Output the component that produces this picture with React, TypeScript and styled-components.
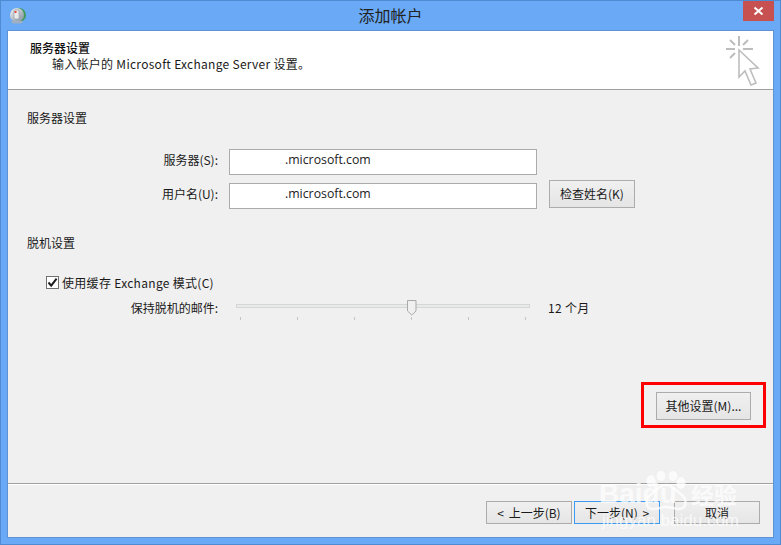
import styled, { createGlobalStyle } from 'styled-components'

const GlobalStyle = createGlobalStyle`
  html, body {
    margin: 0;
    padding: 0;
    overflow: hidden;
    background: #69a9f5;
  }
  body {
    font-family: "Noto Sans CJK SC", "Open Sans", "Noto Sans", sans-serif;
    font-size: 12px;
    color: #1a1a1a;
  }
`

const Window = styled.div`
  box-sizing: border-box;
  width: 781px;
  height: 545px;
  border: 1px solid #4f8bd3;
  background: #69a9f5;
  display: flex;
  flex-direction: column;
  padding: 0 6px 6px;
  position: relative;
  overflow: hidden;
`

const TitleBar = styled.div`
  height: 29px;
  flex: none;
  display: flex;
  align-items: center;
  position: relative;
`

const TitleText = styled.div`
  flex: 1;
  text-align: center;
  font-size: 16px;
  line-height: 29px;
  color: #222;
`

const AppIcon = styled.svg`
  position: absolute;
  left: 2px;
  top: 6px;
`

const CloseButton = styled.div`
  position: absolute;
  right: 0;
  top: 0;
  width: 31px;
  height: 20px;
  background: #c75050;
  display: flex;
  align-items: center;
  justify-content: center;
`

const Client = styled.div`
  flex: 1;
  display: flex;
  flex-direction: column;
  background: #f0f0f0;
  border: 1px solid #5d93d6;
  min-height: 0;
  position: relative;
`

const Header = styled.div`
  height: 59px;
  flex: none;
  box-sizing: border-box;
  background: #fff;
  border-bottom: 1px solid #a0a0a0;
  padding: 9px 0 0 22px;
  display: flex;
  flex-direction: column;
  position: relative;
`

const HeaderTitle = styled.div`
  font-size: 12px;
  line-height: 16px;
  font-weight: 500;
  color: #111;
`

const HeaderSub = styled.div`
  font-size: 12px;
  line-height: 15px;
  padding-left: 22px;
  letter-spacing: 0.28px;
`

const HeaderIcon = styled.svg`
  position: absolute;
  right: 13px;
  top: 5px;
`

const Body = styled.div`
  flex: 1;
  padding: 20px 0 0 19px;
  display: flex;
  flex-direction: column;
`

const SectionLabel = styled.div`
  font-size: 12px;
  line-height: 16px;
`

const ServerGrid = styled.div`
  display: grid;
  grid-template-columns: 202px 308px 86px;
  grid-template-rows: 26px 26px;
  row-gap: 8px;
  column-gap: 0;
  margin-top: 23px;
  align-items: center;
`

const FieldLabel = styled.label`
  text-align: right;
  padding-right: 11px;
  font-size: 12px;
  line-height: 16px;
  margin-top: -5px;
`

const TextField = styled.div`
  box-sizing: border-box;
  height: 26px;
  background: #fff;
  border: 1px solid #ababab;
  padding-left: 55px;
  font-size: 12.3px;
  line-height: 19px;
  color: #222;
  font-family: "Open Sans", "Noto Sans", sans-serif;
`

const Button = styled.div<{ $width: number; $focused?: boolean }>`
  box-sizing: border-box;
  width: ${({ $width }) => $width}px;
  display: flex;
  align-items: center;
  justify-content: center;
  border: 1px solid ${({ $focused }) => ($focused ? '#3c9af0' : '#acacac')};
  background: linear-gradient(#f0f0f0, #e5e5e5);
  font-size: 12px;
  line-height: 16px;
  color: #1a1a1a;
  white-space: nowrap;
`

const CheckNameButton = styled(Button)`
  height: 28px;
  margin-left: 12px;
  margin-top: -4px;
`

const OfflineSection = styled.div`
  margin-top: 26px;
`

const CheckRow = styled.div`
  display: flex;
  align-items: center;
  gap: 3px;
  margin: 23px 0 0 19px;
  height: 16px;
  letter-spacing: 0.3px;
`

const CheckBox = styled.div`
  box-sizing: border-box;
  width: 13px;
  height: 13px;
  background: #fff;
  border: 1px solid #707070;
  display: flex;
  align-items: center;
  justify-content: center;
`

const SliderRow = styled.div`
  display: grid;
  grid-template-columns: 191px 294px auto;
  column-gap: 0;
  margin-top: 10px;
  height: 24px;
  align-items: start;
`

const SliderLabel = styled.div`
  text-align: right;
  line-height: 16px;
`

const SliderTrack = styled.div`
  margin-left: 18px;
  width: 294px;
  height: 23px;
  position: relative;
`

const TrackBar = styled.div`
  box-sizing: border-box;
  height: 4px;
  margin-top: 4px;
  background: #e7eaea;
  border: 1px solid #d6d6d6;
`

const Ticks = styled.div`
  display: flex;
  justify-content: space-between;
  padding: 0 4px;
  margin-top: 9px;
`

const Tick = styled.i`
  display: block;
  width: 1px;
  height: 3px;
  background: #c4c4c4;
`

const Thumb = styled.svg`
  position: absolute;
  left: 171px;
  top: 0;
`

const SliderValue = styled.div`
  margin-left: 36px;
  line-height: 16px;
  white-space: nowrap;
  letter-spacing: 0.3px;
`

const MoreRow = styled.div`
  margin-top: auto;
  margin-right: 22px;
  margin-bottom: 63px;
  display: flex;
  justify-content: flex-end;
  position: relative;
`

const MoreButton = styled(Button)`
  height: 28px;
`

const Highlight = styled.div`
  position: absolute;
  box-sizing: border-box;
  right: -15px;
  top: -10px;
  width: 125px;
  height: 46px;
  border: 3px solid #f00;
  pointer-events: none;
`

const Footer = styled.div`
  flex: none;
  height: 54px;
  box-sizing: border-box;
  border-top: 1px solid #a0a0a0;
  box-shadow: inset 0 1px #fff;
  padding: 17px 13px 0 0;
  display: flex;
  justify-content: flex-end;
`

const FooterButton = styled(Button)<{ $gap?: number }>`
  height: 23px;
  margin-left: ${({ $gap }) => $gap ?? 0}px;
  word-spacing: 2px;
`

const Watermark = styled.div`
  position: absolute;
  left: 598px;
  top: 470px;
  width: 145px;
  height: 62px;
  color: rgba(255, 255, 255, 0.72);
  pointer-events: none;
  font-family: "Liberation Sans", sans-serif;
`

const WatermarkBrand = styled.div`
  position: absolute;
  left: 0;
  top: 9px;
  font-size: 28px;
  line-height: 28px;
  font-weight: 700;
  white-space: nowrap;
`

const WatermarkCn = styled.span`
  position: absolute;
  left: 92px;
  top: 0;
  font-family: "Noto Sans CJK SC", sans-serif;
  font-size: 23px;
  font-weight: 700;
`

const WatermarkUrl = styled.div`
  position: absolute;
  left: 3px;
  top: 41px;
  font-size: 17px;
  line-height: 18px;
  white-space: nowrap;
`

const PawIcon = styled.svg`
  position: absolute;
  left: 46px;
  top: 0;
`

export default function App() {
  return (
    <>
      <GlobalStyle />
      <Window>
        <TitleBar>
          <AppIcon width="18" height="18" viewBox="0 0 18 18">
            <defs>
              <linearGradient id="appBody" x1="0" y1="0" x2="1" y2="1">
                <stop offset="0" stopColor="#f4f6f8" />
                <stop offset="1" stopColor="#7f8b98" />
              </linearGradient>
            </defs>
            <circle cx="10" cy="8" r="7" fill="#3f9b5d" />
            <circle cx="8" cy="8" r="7" fill="url(#appBody)" />
            <rect x="5" y="3" width="5" height="9" rx="1" fill="#e8eaec" stroke="#8a97a5" strokeWidth="0.6" />
            <rect x="5.5" y="4" width="2" height="2" fill="#e4493f" />
            <ellipse cx="8" cy="15" rx="6" ry="1.6" fill="#9fb0c2" />
          </AppIcon>
          <TitleText>添加帐户</TitleText>
          <CloseButton>
            <svg width="11" height="10" viewBox="0 0 11 10">
              <path d="M1.5 1.5 9.5 8.5M9.5 1.5 1.5 8.5" stroke="#fff" strokeWidth="2" />
            </svg>
          </CloseButton>
        </TitleBar>
        <Client>
          <Header>
            <HeaderTitle>服务器设置</HeaderTitle>
            <HeaderSub>输入帐户的 Microsoft Exchange Server 设置。</HeaderSub>
            <HeaderIcon width="34" height="50" viewBox="0 0 34 50" fill="none" stroke="#bdbdbd" strokeWidth="2">
              <path d="M13 0V10M0 13H9M17 13H27M4 4 9 9M22 4 17 9M4 22 9 17" />
              <path d="M13 14V41L19 35 25 49 30 47 24 33 32 32Z" strokeWidth="1.6" fill="#fff" />
            </HeaderIcon>
          </Header>
          <Body>
            <SectionLabel>服务器设置</SectionLabel>
            <ServerGrid>
              <FieldLabel>服务器(S):</FieldLabel>
              <TextField>.microsoft.com</TextField>
              <span />
              <FieldLabel>用户名(U):</FieldLabel>
              <TextField>.microsoft.com</TextField>
              <CheckNameButton $width={86}>检查姓名(K)</CheckNameButton>
            </ServerGrid>
            <OfflineSection>
              <SectionLabel>脱机设置</SectionLabel>
              <CheckRow>
                <CheckBox>
                  <svg width="11" height="11" viewBox="0 0 11 11">
                    <path d="M1.5 5.5 4.2 8.6 9.6 1.6" fill="none" stroke="#1c1c1c" strokeWidth="2" />
                  </svg>
                </CheckBox>
                <span>使用缓存 Exchange 模式(C)</span>
              </CheckRow>
              <SliderRow>
                <SliderLabel>保持脱机的邮件:</SliderLabel>
                <SliderTrack>
                  <TrackBar />
                  <Ticks>
                    {[0, 1, 2, 3, 4, 5].map((n) => (
                      <Tick key={n} />
                    ))}
                  </Ticks>
                  <Thumb width="10" height="16" viewBox="0 0 10 16">
                    <path d="M.5.5H9V11L4.75 15 .5 11Z" fill="#f0f0f0" stroke="#a9a9a9" />
                  </Thumb>
                </SliderTrack>
                <SliderValue>12 个月</SliderValue>
              </SliderRow>
            </OfflineSection>
            <MoreRow>
              <MoreButton $width={95}>其他设置(M)...</MoreButton>
              <Highlight />
            </MoreRow>
          </Body>
          <Footer>
            <FooterButton $width={86}>&lt; 上一步(B)</FooterButton>
            <FooterButton $width={86} $gap={2} $focused>下一步(N) &gt;</FooterButton>
            <FooterButton $width={86} $gap={14}>取消</FooterButton>
          </Footer>
        </Client>
        <Watermark>
          <PawIcon width="44" height="42" viewBox="0 0 44 42" fill="currentColor">
            <ellipse cx="6" cy="10" rx="4.5" ry="6" />
            <ellipse cx="16" cy="5" rx="4.5" ry="5" />
            <ellipse cx="28" cy="5" rx="4.5" ry="5" />
            <ellipse cx="36" cy="12" rx="4.5" ry="6" />
            <path d="M21 14C14 14 11 20 5 24 0 28 0 38 8 38 13 38 17 36 21 36 26 36 30 38 34 38 42 38 42 28 37 24 31 20 28 14 21 14Z" fill="none" stroke="currentColor" strokeWidth="2.5" />
          </PawIcon>
          <WatermarkBrand>
            Baidu<WatermarkCn>经验</WatermarkCn>
          </WatermarkBrand>
          <WatermarkUrl>jingyan.baidu.com</WatermarkUrl>
        </Watermark>
      </Window>
    </>
  )
}
